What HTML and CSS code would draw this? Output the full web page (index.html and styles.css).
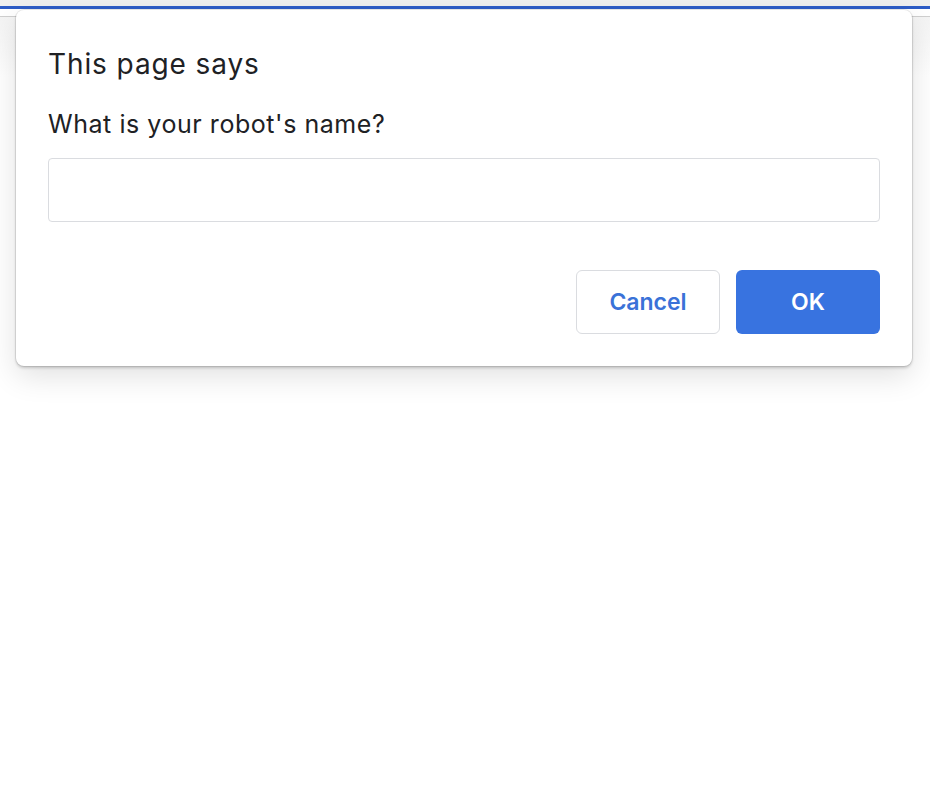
FILE: index.html
```html
<!DOCTYPE html>
<html>
<head>
<meta charset="utf-8">
<link rel="stylesheet" href="styles.css">
</head>
<body>
<div class="chrome">
  <div class="chrome-top"></div>
  <div class="chrome-accent"></div>
  <div class="chrome-gap"></div>
  <div class="chrome-line"></div>
</div>
<div class="page"></div>
<div class="dialog">
  <div class="title">This page says</div>
  <div class="message">What is your robot's name?</div>
  <input class="field" type="text">
  <div class="actions">
    <button class="btn btn-cancel">Cancel</button>
    <button class="btn btn-ok">OK</button>
  </div>
</div>
</body>
</html>
```
FILE: styles.css
```css
html, body {
  margin: 0;
  padding: 0;
  background: #ffffff;
  font-family: "Inter", "Roboto", "Liberation Sans", sans-serif;
}
.chrome-top {
  height: 6px;
  background: #efefef;
}
.chrome-accent {
  height: 3px;
  background: #2d5cc6;
}
.chrome-gap {
  height: 7px;
  background: #ffffff;
}
.chrome-line {
  height: 1px;
  background: #cfcfcf;
}
.page {
  height: 781px;
  background: linear-gradient(#f4f4f4, #ffffff 60px);
}
.dialog {
  position: absolute;
  top: 10px;
  left: 16px;
  width: 896px;
  height: 356px;
  box-sizing: border-box;
  background: #ffffff;
  border-radius: 8px;
  box-shadow: 0 0 0 1px rgba(0,0,0,0.08), 0 2px 3px rgba(0,0,0,0.18), 0 10px 30px rgba(0,0,0,0.12);
  padding: 36px 32px 0 32px;
  display: flex;
  flex-direction: column;
}
.title {
  font-size: 28px;
  line-height: 36px;
  color: #202124;
  letter-spacing: 0.9px;
}
.message {
  margin-top: 25px;
  font-size: 25px;
  line-height: 34px;
  color: #202124;
  letter-spacing: 0.55px;
}
.field {
  margin-top: 17px;
  height: 64px;
  box-sizing: border-box;
  width: 832px;
  border: 1px solid #dadce0;
  border-radius: 4px;
  outline: none;
  background: #ffffff;
}
.actions {
  margin-top: 48px;
  display: flex;
  justify-content: flex-end;
  gap: 16px;
}
.btn {
  width: 144px;
  height: 64px;
  box-sizing: border-box;
  border-radius: 6px;
  font-family: "Inter", "Roboto", "Liberation Sans", sans-serif;
  font-size: 23px;
  font-weight: 600;
  cursor: pointer;
}
.btn-cancel {
  background: #ffffff;
  border: 1px solid #dadce0;
  color: #3a72d8;
}
.btn-ok {
  background: #3873e0;
  border: none;
  color: #ffffff;
}
```
